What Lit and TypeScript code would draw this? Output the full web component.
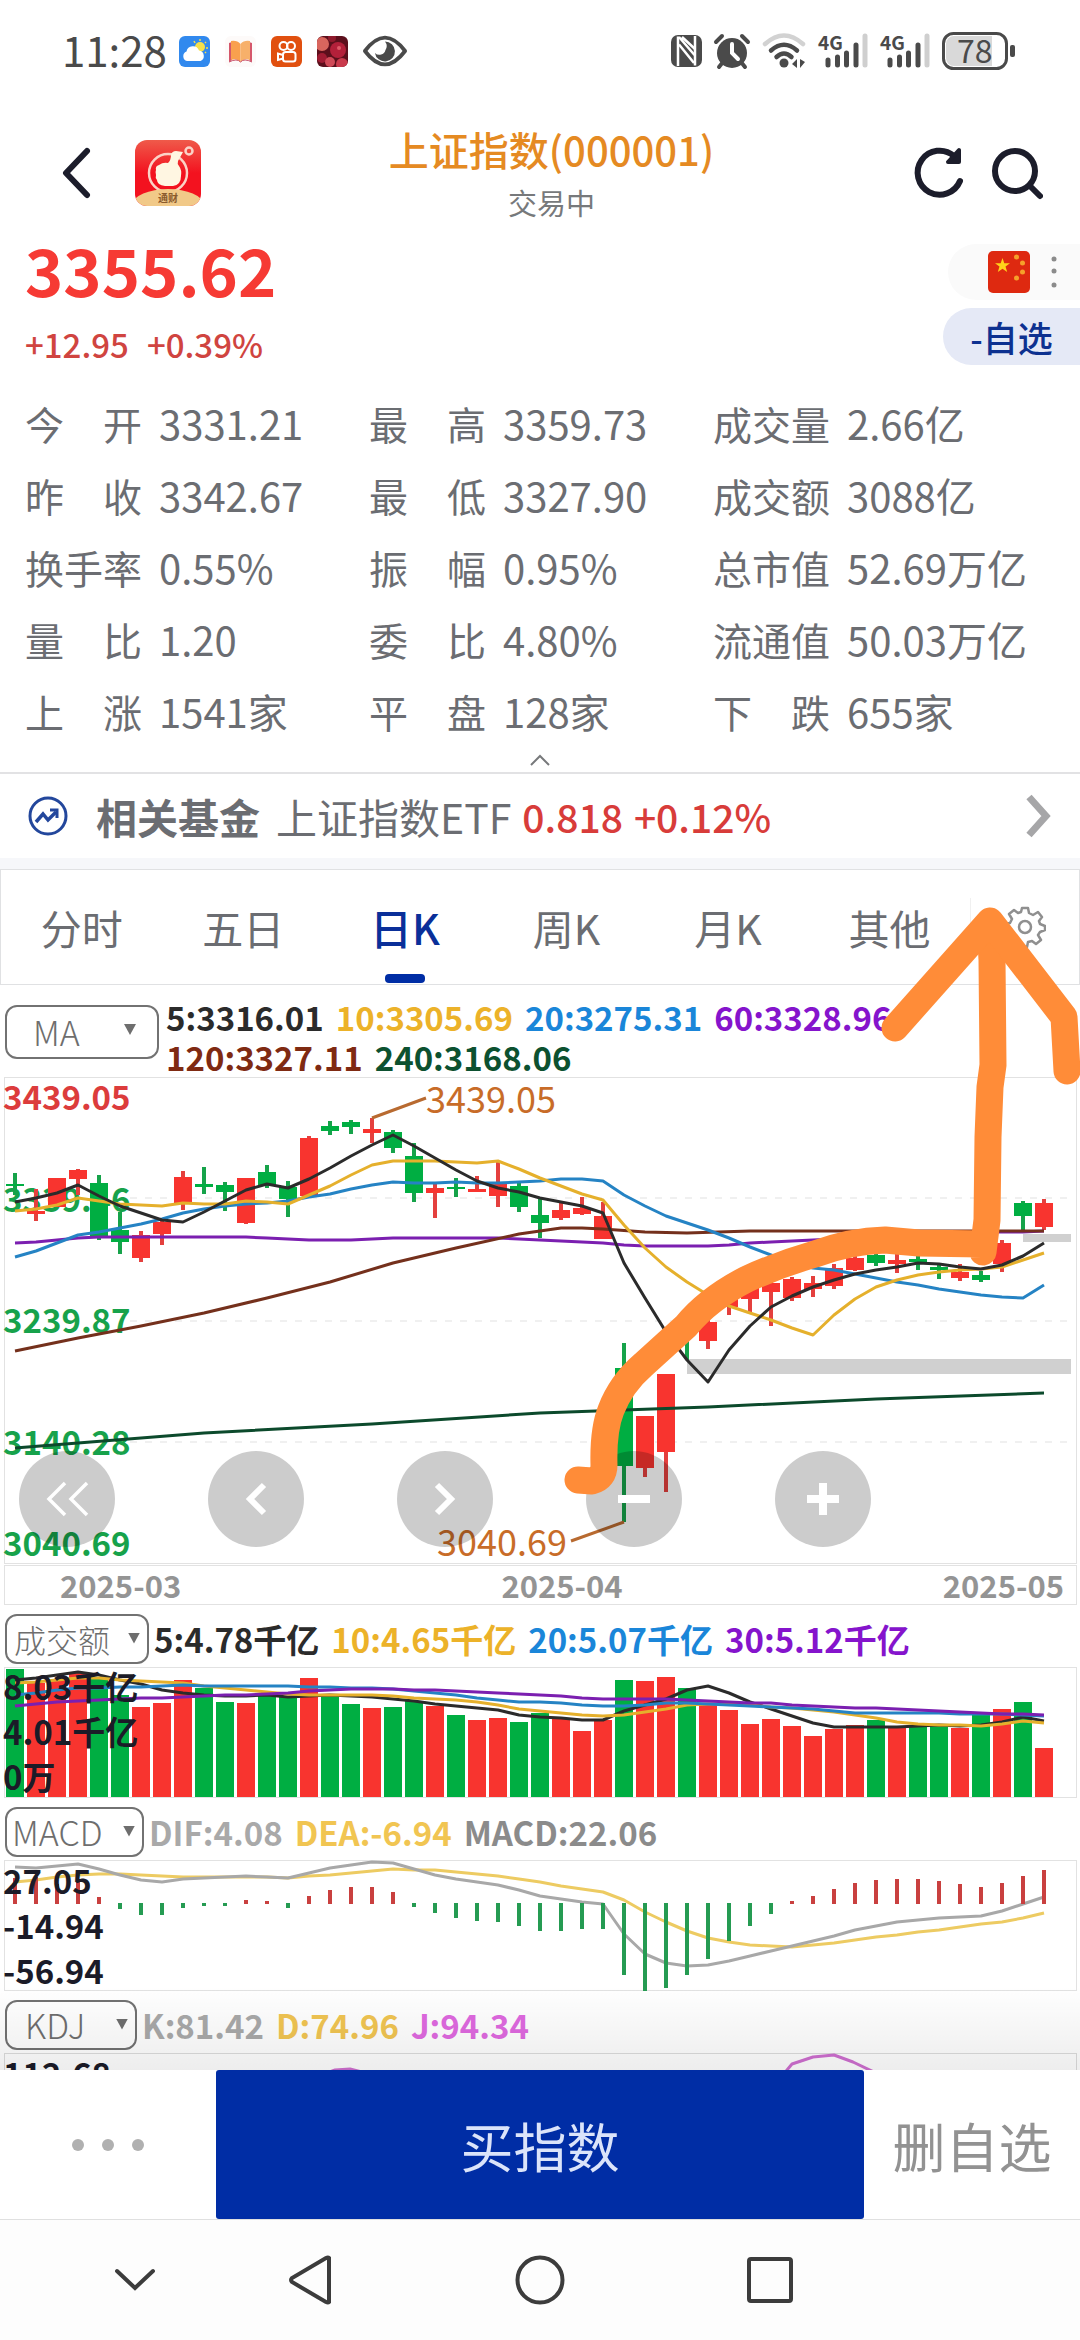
import { LitElement, html, svg, css } from "lit";
import { customElement, state } from "lit/decorators.js";

type Candle = [high: number, top: number, bottom: number, low: number, dir: number];
type LabelItem = { text: string; tone: string };

const STEP = 21;
const FIRST = 15;
const BODY = 18;
const RED = "#f8342f";
const GREEN = "#00ae42";
const xAt = (i: number) => FIRST + i * STEP;

// Each candle: high, body top, body bottom, low (plot units), 1 = rising, 0 = falling.
const CANDLES: Candle[] = [
  [103, 114, 116, 125, 0], [119, 141, 144, 151, 1], [108, 108, 137, 137, 1], [99, 100, 109, 125, 1], [105, 113, 167, 170, 0],
  [142, 160, 172, 184, 0], [161, 165, 188, 192, 1], [148, 152, 164, 175, 1], [101, 107, 133, 140, 1], [97, 114, 117, 124, 0],
  [112, 115, 122, 141, 0], [108, 108, 153, 154, 1], [95, 102, 115, 118, 0], [111, 117, 129, 147, 0], [66, 68, 126, 126, 1],
  [51, 56, 61, 65, 0], [50, 52, 57, 64, 0], [48, 59, 63, 73, 1], [60, 62, 78, 83, 0], [73, 86, 123, 132, 0],
  [114, 118, 123, 148, 1], [108, 117, 119, 127, 0], [106, 119, 122, 122, 1], [92, 112, 126, 137, 1], [112, 116, 137, 142, 0],
  [128, 145, 153, 168, 0], [133, 140, 148, 150, 1], [127, 138, 144, 145, 1], [132, 146, 169, 169, 1], [273, 298, 396, 452, 0],
  [346, 346, 398, 407, 1], [304, 304, 382, 422, 1], [240, 245, 262, 290, 0], [245, 252, 271, 279, 1], [220, 225, 237, 245, 1],
  [212, 218, 229, 242, 1], [208, 213, 222, 256, 1], [207, 209, 228, 231, 1], [206, 213, 219, 227, 1], [194, 198, 216, 219, 1],
  [184, 188, 200, 201, 1], [181, 185, 193, 196, 0], [183, 190, 194, 203, 1], [185, 189, 192, 200, 0], [195, 197, 200, 209, 0],
  [194, 202, 208, 211, 1], [201, 205, 210, 212, 0], [170, 173, 194, 202, 1], [131, 133, 146, 163, 0], [129, 133, 157, 160, 1],
];

const MA5 = [132, 128, 123, 115, 126, 136, 143, 150, 152, 142, 131, 120, 114, 118, 109, 98, 86, 75, 65, 76, 88, 100, 111, 118, 122, 128, 132, 136, 143, 193, 228, 262, 290, 312, 280, 256, 237, 226, 217, 210, 204, 200, 197, 193, 194, 197, 199, 195, 186, 173];
const MA10 = [141, 139, 135, 128, 131, 134, 135, 136, 133, 134, 134, 131, 132, 134, 125, 116, 105, 95, 91, 91, 91, 92, 93, 91, 99, 108, 116, 124, 130, 155, 178, 197, 212, 225, 236, 243, 250, 258, 265, 245, 229, 217, 210, 205, 202, 200, 199, 197, 190, 183];
const MA20 = [187, 181, 173, 165, 162, 158, 154, 149, 143, 139, 136, 134, 133, 131, 127, 124, 119, 115, 112, 113, 113, 112, 113, 113, 112, 111, 109, 109, 111, 125, 136, 146, 153, 160, 168, 177, 185, 193, 198, 200, 204, 208, 212, 215, 219, 222, 225, 227, 228, 215];
const MA60 = [173, 172, 170, 168, 167, 167, 167, 167, 167, 167, 167, 167, 168, 169, 170, 170, 170, 169, 168, 168, 168, 168, 168, 168, 169, 170, 171, 172, 173, 175, 176, 176, 176, 176, 175, 173, 172, 171, 170, 169, 168, 167, 166, 165, 164, 163, 162, 162, 162, 161];
const MA120: [number, number][] = [[0, 281], [3, 268], [6, 256], [9, 243], [12, 228], [15, 212], [18, 193], [21, 178], [24, 164], [26, 158], [27, 158], [28, 159], [30, 162], [32, 163], [35, 161], [40, 161], [49, 161]];
const MA240: [number, number][] = [[0, 378], [9, 363], [17, 354], [25, 343], [33, 337], [41, 329], [49, 323]];

// Turnover: the top of each bar, and whether the day closed higher.
const VOL = [69, 83, 80, 72, 79, 95, 107, 103, 80, 88, 102, 103, 95, 96, 78, 96, 104, 108, 107, 101, 106, 115, 120, 118, 122, 113, 119, 131, 120, 80, 81, 77, 88, 104, 110, 124, 119, 126, 136, 129, 125, 120, 128, 125, 124, 128, 115, 109, 102, 148];
const VOL_UP = [0, 1, 1, 1, 0, 0, 1, 1, 1, 0, 0, 1, 0, 0, 1, 0, 0, 1, 0, 0, 1, 0, 1, 1, 0, 0, 1, 1, 1, 0, 1, 1, 0, 1, 1, 1, 1, 1, 1, 1, 1, 0, 1, 0, 0, 1, 0, 1, 0, 1];
const VOL5 = [80, 78, 75, 72, 75, 80, 84, 90, 93, 95, 96, 96, 95, 97, 96, 95, 96, 97, 99, 101, 104, 106, 108, 110, 115, 117, 118, 120, 120, 111, 105, 99, 90, 86, 93, 102, 109, 116, 123, 127, 127, 127, 127, 126, 125, 126, 125, 122, 117, 121];
const VOL10 = [83, 82, 80, 78, 78, 80, 81, 82, 83, 86, 88, 90, 92, 94, 95, 95, 95, 95, 96, 98, 99, 100, 102, 105, 109, 111, 113, 115, 116, 115, 112, 109, 105, 104, 104, 105, 107, 108, 110, 112, 115, 118, 122, 124, 125, 125, 126, 124, 121, 123];
const VOL20 = [95, 93, 90, 88, 88, 87, 87, 86, 85, 86, 86, 86, 86, 86, 87, 87, 88, 88, 89, 91, 93, 95, 98, 100, 102, 102, 103, 105, 106, 106, 105, 103, 103, 104, 105, 106, 107, 108, 109, 111, 113, 113, 113, 113, 113, 114, 114, 114, 115, 116];
const VOL30 = [106, 104, 102, 101, 100, 99, 98, 98, 97, 96, 95, 95, 94, 93, 91, 90, 89, 89, 89, 90, 90, 91, 92, 93, 94, 95, 96, 98, 99, 99, 99, 99, 100, 101, 102, 103, 103, 105, 106, 107, 108, 108, 109, 110, 111, 112, 113, 114, 114, 115];

const MACD_ZERO = 303;
const MACD = [278, 277, 284, 282, 297, 308, 314, 314, 307, 305, 305, 300, 301, 307, 296, 290, 287, 287, 292, 306, 312, 317, 320, 321, 325, 330, 330, 328, 328, 374, 390, 387, 374, 358, 340, 325, 313, 301, 296, 289, 283, 280, 279, 279, 281, 284, 287, 283, 276, 270];
const DIF = [267, 268, 266, 264, 269, 275, 280, 282, 279, 278, 277, 276, 277, 278, 273, 268, 265, 262, 263, 269, 275, 279, 282, 285, 290, 296, 299, 302, 304, 334, 354, 363, 366, 365, 361, 356, 351, 346, 341, 336, 330, 326, 322, 320, 318, 317, 316, 311, 304, 297];
const DEA = [282, 280, 277, 275, 274, 274, 275, 276, 277, 277, 277, 277, 277, 278, 276, 275, 273, 271, 269, 270, 270, 272, 274, 276, 279, 282, 286, 289, 292, 300, 312, 322, 331, 338, 342, 345, 346, 347, 345, 343, 340, 337, 335, 332, 330, 327, 324, 322, 318, 313];

const STATS: [string, string][] = [
  ["今开", "3331.21"], ["最高", "3359.73"], ["成交量", "2.66亿"],
  ["昨收", "3342.67"], ["最低", "3327.90"], ["成交额", "3088亿"],
  ["换手率", "0.55%"], ["振幅", "0.95%"], ["总市值", "52.69万亿"],
  ["量比", "1.20"], ["委比", "4.80%"], ["流通值", "50.03万亿"],
  ["上涨", "1541家"], ["平盘", "128家"], ["下跌", "655家"],
];

const series = (values: number[]) => values.map((y, i) => `${xAt(i)},${y}`).join(" ");
const sparse = (points: [number, number][]) => points.map(([i, y]) => `${xAt(i)},${y}`).join(" ");
const line = (points: string, color: string, width = 3) =>
  svg`<polyline points=${points} fill="none" stroke=${color} stroke-width=${width} stroke-linejoin="round"/>`;

const chartStyles = css`
  :host { display: block; }
  svg { display: block; width: 100%; height: auto; font-family: "Noto Sans CJK SC", sans-serif; }
  .scale { font-size: 33px; font-weight: 700; }
  .high { fill: #dc3c3c; }
  .low { fill: #17a24b; }
  .ink { fill: #1b1b28; }
  .callout { font-size: 36px; fill: #c86c28; }
`;

@customElement("price-chart")
export class PriceChart extends LitElement {
  static styles = chartStyles;
  render() {
    return html`<svg viewBox="0 7 1080 488" role="img" aria-label="日K">
      <rect x="4.5" y="7.5" width="1072" height="486" fill="none" stroke="#e2e2e2"/>
      ${[128, 251, 372].map((y) => svg`<path d="M130 ${y}H1072" stroke="#ececec" stroke-width="1.5" stroke-dasharray="7 8"/>`)}
      <text class="scale high" x="3" y="40">3439.05</text>
      <text class="scale low" x="3" y="142">3339.46</text>
      <text class="scale low" x="3" y="263">3239.87</text>
      <text class="scale low" x="3" y="385">3140.28</text>
      <text class="scale low" x="3" y="486">3040.69</text>
      <rect x="687" y="289" width="384" height="15" fill="#d0d0d0"/>
      <rect x="1023" y="164" width="48" height="8" fill="#d0d0d0"/>
      ${CANDLES.map(([high, top, bottom, low, up], i) => {
        const color = up ? RED : GREEN;
        return svg`<rect x=${xAt(i) - 2} y=${high} width="4" height=${low - high} fill=${up ? "#e4403e" : "#16a34a"}/>
          <rect x=${xAt(i) - 9} y=${top} width=${BODY} height=${bottom - top} fill=${color}/>`;
      })}
      ${line(series(MA60), "#7b1fb0")}
      ${line(sparse(MA240), "#0c4a2c")}
      ${line(sparse(MA120), "#74301c")}
      ${line(series(MA20), "#2583c4")}
      ${line(series(MA10), "#e5b02c")}
      ${line(series(MA5), "#2b2b2b")}
      <path d="M372 48L426 28M624 452L571 471" stroke="#b86a30" stroke-width="3"/>
      <text class="callout" x="426" y="43">3439.05</text>
      <text class="callout" x="437" y="486">3040.69</text>
    </svg>`;
  }
}

@customElement("turnover-chart")
export class TurnoverChart extends LitElement {
  static styles = chartStyles;
  render() {
    return html`<svg viewBox="0 67 1080 131" role="img" aria-label="成交额">
      <rect x="4.5" y="67.5" width="1072" height="130" fill="none" stroke="#e2e2e2"/>
      ${VOL.map((y, i) => svg`<rect x=${xAt(i) - 9} y=${y} width=${BODY} height=${197 - y} fill=${VOL_UP[i] ? RED : GREEN}/>`)}
      ${line(series(VOL5), "#2b2b2b")}
      ${line(series(VOL10), "#e5b02c")}
      ${line(series(VOL20), "#2583c4")}
      ${line(series(VOL30), "#7b1fb0")}
      <text class="scale ink" x="3" y="100">8.03千亿</text>
      <text class="scale ink" x="3" y="145">4.01千亿</text>
      <text class="scale ink" x="3" y="190">0万</text>
    </svg>`;
  }
}

@customElement("macd-chart")
export class MacdChart extends LitElement {
  static styles = chartStyles;
  render() {
    return html`<svg viewBox="0 260 1080 131" role="img" aria-label="MACD">
      <rect x="4.5" y="260.5" width="1072" height="130" fill="none" stroke="#e2e2e2"/>
      ${line(series(DEA), "#edcb62")}
      ${line(series(DIF), "#a8a8a8")}
      ${MACD.map((y, i) => svg`<rect x=${xAt(i) - 2} y=${Math.min(y, MACD_ZERO)} width="4" height=${Math.abs(y - MACD_ZERO) + 1} fill=${y < MACD_ZERO ? "#c9403f" : "#259b52"}/>`)}
      <text class="scale ink" x="3" y="294">27.05</text>
      <text class="scale ink" x="3" y="339">-14.94</text>
      <text class="scale ink" x="3" y="384">-56.94</text>
    </svg>`;
  }
}

@customElement("kdj-chart")
export class KdjChart extends LitElement {
  static styles = chartStyles;
  render() {
    return html`<svg viewBox="0 453 1080 131" role="img" aria-label="KDJ">
      <rect x="4.5" y="453.5" width="1072" height="130" fill="none" stroke="#dcdcdc"/>
      <text class="scale ink" x="3" y="487">112.68</text>
      ${line("318,476 335,470 350,469 362,472", "#cf6fd0")}
      ${line("782,476 792,464 813,457 834,455 853,462 878,474", "#cf6fd0")}
    </svg>`;
  }
}

@customElement("indicator-legend")
export class IndicatorLegend extends LitElement {
  static properties = { name: {}, options: { attribute: false }, rows: { attribute: false }, size: {} };
  declare name: string;
  declare options: string[];
  declare rows: LabelItem[][];
  declare size: string;
  static styles = css`
    :host { display: block; }
    .bar { display: flex; align-items: center; gap: 5px; padding: 5px 0 0 5px; height: 57px; }
    .bar.tall { align-items: flex-start; gap: 7px; padding-top: 12px; height: 80px; }
    .picker { position: relative; display: block; flex: none; }
    .tall .picker { margin-top: 8px; }
    select {
      appearance: none; display: block; box-sizing: border-box; height: 50px; width: 144px; margin: 0;
      padding: 0 32px 0 7px; border: 2px solid #727272; border-radius: 12px; background: #fff; color: #6e6e6e;
      font: 300 32px/44px "Noto Sans CJK SC", sans-serif;
    }
    select.wide, select.mid, select.slim { font-size: 34px; }
    select.wide { width: 154px; height: 54px; padding-left: 26px; }
    select.mid { width: 139px; padding-left: 5px; }
    select.slim { width: 132px; padding-left: 18px; }
    .picker::after {
      content: ""; position: absolute; right: 9px; top: 19px; width: 12px; height: 11px;
      background: #6e6e6e; clip-path: polygon(0 0, 100% 0, 50% 100%);
    }
    .tall .picker::after { right: 23px; }
    .rows { min-width: 0; }
    .row { display: flex; gap: 12px; font: 700 33px/40px "Noto Sans CJK SC", sans-serif; white-space: nowrap; }
    .ink { color: #2b2b2b; }
    .gold { color: #ecb229; }
    .sand { color: #f1c552; }
    .blue { color: #1a86d9; }
    .violet { color: #8514cc; }
    .brown { color: #7f2a12; }
    .forest { color: #0c5130; }
    .silver { color: #a9a9a9; }
    .grey { color: #8b8b8b; }
    .pink { color: #df69e0; }
  `;
  render() {
    return html`<div class="bar ${this.size === "wide" ? "tall" : ""}">
      <label class="picker"><select class=${this.size} aria-label=${this.name}>
        ${this.options.map((o) => html`<option>${o}</option>`)}
      </select></label>
      <div class="rows">${this.rows.map((r) => html`<div class="row">${r.map((it) => html`<span class=${it.tone}>${it.text}</span>`)}</div>`)}</div>
    </div>`;
  }
}

@customElement("status-bar")
export class StatusBar extends LitElement {
  static styles = css`
    :host { display: block; }
    .bar { display: flex; align-items: center; justify-content: space-between; height: 102px; padding: 0 64px 0 62px; }
    .side { display: flex; align-items: center; }
    .time { font: 400 42px/60px "Noto Sans CJK SC", sans-serif; color: #4a4a4a; margin-right: 12px; padding-bottom: 4px; }
    .apps { display: flex; align-items: center; gap: 15px; }
    .system { gap: 12px; }
    .battery { font: 400 32px "Noto Sans CJK SC", sans-serif; fill: #4a4a4a; }
    .net { font: 700 19px "Noto Sans CJK SC", sans-serif; fill: #4a4a4a; }
    svg { display: block; overflow: visible; }
  `;
  private signal() {
    return html`<svg width="50" height="36" viewBox="0 0 50 36">
      <text class="net" x="0" y="17">4G</text>
      <g stroke="#4a4a4a" stroke-width="5" stroke-linecap="round"><path d="M10 27V32M19.500 24V32M28.500 20V32M38 12V32"/><path d="M47 3V32" stroke="#cfcfcf"/></g>
    </svg>`;
  }
  render() {
    return html`<div class="bar">
      <div class="side">
        <span class="time">11:28</span>
        <div class="apps">
          <svg width="31" height="31" viewBox="0 0 31 31"><rect width="31" height="31" rx="6" fill="#3189ee"/><circle cx="21" cy="11" r="5" fill="#f5e04a"/><path d="M21 3V5M27 6L26 7M29 12H27M15 5L16 7M27 17L26 16" stroke="#f5e04a" stroke-width="1.500"/><path d="M8 25a5 5 0 0 1-.5-9.500a6.500 6.500 0 0 1 12.500-1a5.500 5.500 0 0 1 1.500 10.500z" fill="#fff"/></svg>
          <svg width="31" height="31" viewBox="0 0 31 31"><rect width="31" height="31" rx="6" fill="#fdfaf9"/><path d="M4 7L7 6V24L4 26zM27 7L24 6V24L27 26z" fill="#d5576b"/><path d="M6 5Q12 4 15.500 8V26Q12 22 6 24z" fill="#f9a04e"/><path d="M25 5Q19 4 15.500 8V26Q19 22 25 24z" fill="#f7b06a"/><path d="M4 26Q12 22 15.500 26Q19 22 27 26" stroke="#c9516b" fill="none"/></svg>
          <svg width="31" height="31" viewBox="0 0 31 31"><rect width="31" height="31" rx="6" fill="#e1500f"/><g fill="none" stroke="#fff" stroke-width="2"><circle cx="12.500" cy="10" r="4"/><circle cx="20" cy="10" r="4"/><rect x="12" y="16" width="12.500" height="9.500" rx="2.500"/><path d="M12 19L7 17.500V24L12 22.500"/></g></svg>
          <svg width="31" height="31" viewBox="0 0 31 31"><defs><clipPath id="p"><rect width="31" height="31" rx="6"/></clipPath></defs><g clip-path="url(#p)"><rect width="31" height="31" fill="#5c0f1c"/><circle cx="5" cy="8" r="7" fill="#d9665e"/><circle cx="21" cy="14" r="8" fill="#b3203a"/><circle cx="15" cy="2" r="4" fill="#8e1a2c"/><circle cx="5" cy="22" r="5" fill="#a01c33"/><circle cx="13" cy="26" r="5" fill="#d04a58"/><circle cx="25" cy="28" r="6" fill="#c93a4c"/><circle cx="22" cy="12" r="2" fill="#df5a68"/></g></svg>
          <svg width="44" height="32" viewBox="0 0 46 32"><path d="M2 16Q23-12 44 16Q23 44 2 16z" fill="none" stroke="#4a4a4a" stroke-width="4" stroke-linejoin="round"/><path d="M23 6a10.500 10.500 0 1 1-10.500 12a6.500 6.500 0 0 0 11-3a8 8 0 0 0-.5-9z" fill="#4a4a4a"/></svg>
        </div>
      </div>
      <div class="side system">
        <svg width="31" height="32" viewBox="0 0 31 32"><rect width="31" height="32" rx="7" fill="#4a4a4a"/><path d="M7 1.500V31M24 1V30.500" stroke="#fff" stroke-width="2.500"/><path d="M8 2L23.500 20M8 9.500L23 28M11 2L24 14" stroke="#fff" stroke-width="2.500" fill="none"/></svg>
        <svg width="36" height="35" viewBox="0 0 36 35"><circle cx="18" cy="19" r="15" fill="#4a4a4a"/><path d="M2 8L8 2M34 8L28 2M9 28L5 33M27 28L31 33" stroke="#4a4a4a" stroke-width="4" stroke-linecap="round"/><path d="M18 10V19L24 25" stroke="#fff" stroke-width="4" fill="none" stroke-linecap="round"/></svg>
        <svg width="44" height="36" viewBox="0 0 44 36"><g fill="none" stroke-width="4.500" stroke-linecap="round"><path d="M3 11Q22-6 41 11" stroke="#d2d2d2"/><path d="M9 17.500Q22 6 35 17.500M14.500 24Q22 17 29.500 24" stroke="#4a4a4a"/></g><circle cx="22" cy="30" r="4.500" fill="#4a4a4a"/><path d="M35 26V35L30 31zM38 26V35L43 29z" fill="#4a4a4a"/></svg>
        ${this.signal()}${this.signal()}
        <svg width="74" height="38" viewBox="0 0 74 38"><rect x="1.500" y="1.500" width="63" height="35" rx="10" fill="#fff" stroke="#4a4a4a" stroke-width="3"/><path d="M12 4H50V34H12a8 8 0 0 1-8-8V12a8 8 0 0 1 8-8z" fill="#d9d9d9"/><rect x="68" y="13" width="5" height="12" rx="2" fill="#4a4a4a"/><text class="battery" x="15" y="31">78</text></svg>
      </div>
    </div>`;
  }
}

@customElement("app-root")
export class AppRoot extends LitElement {
  @state() private period = "日K";

  static styles = css`
    :host {
      display: flex; flex-direction: column; height: 100vh; position: relative; overflow: hidden;
      background: #fff; color: #6b6d72; font-family: "Noto Sans CJK SC", sans-serif;
    }
    button { appearance: none; border: 0; margin: 0; padding: 0; background: none; font: inherit; color: inherit; }
    a { color: inherit; text-decoration: none; }
    svg { display: block; }
    main { flex: 1 1 0; min-height: 0; overflow: hidden; position: relative; }

    .head { display: grid; grid-template-columns: 1fr auto 1fr; align-items: center; height: 142px; padding: 0 37px 0 60px; }
    .left { display: flex; align-items: center; gap: 44px; }
    .right { display: flex; align-items: center; justify-content: flex-end; gap: 25px; }
    .titles { text-align: center; }
    h1 { margin: 0 0 8px; font-size: 40px; line-height: 50px; font-weight: 500; color: #e58a22; }
    .phase { font-size: 29px; line-height: 40px; color: #77797b; }

    .quote { display: flex; justify-content: space-between; height: 146px; padding-left: 25px; }
    .price { font-size: 65px; line-height: 50px; font-weight: 700; color: #f63a34; }
    .change { display: flex; gap: 18px; margin-top: 28px; font-size: 33px; line-height: 44px; font-weight: 500; color: #d04440; }
    .side { display: flex; flex-direction: column; align-items: flex-end; gap: 8px; }
    .region { display: flex; align-items: center; gap: 21px; height: 56px; width: 132px; padding-left: 40px; box-sizing: border-box; border-radius: 28px 0 0 28px; background: #fafafa; }
    .watch { height: 57px; width: 137px; border-radius: 29px 0 0 29px; background: #e5e9f6; color: #0d3190; font-size: 35px; line-height: 54px; font-weight: 500; }

    .stats { display: grid; grid-template-columns: 344fr 344fr 367fr; grid-auto-rows: 72px; margin: 0; padding-left: 25px; font-size: 39px; line-height: 66px; }
    .stat { display: flex; gap: 17px; }
    dt { display: flex; justify-content: space-between; width: 117px; }
    dd { margin: 0; font-size: 40px; white-space: nowrap; }
    .fold { display: flex; justify-content: center; width: 100%; height: 22px; padding-top: 4px; box-sizing: border-box; }

    .fund { display: flex; align-items: center; height: 84px; padding: 0 28px; border-top: 2px solid #e2e2e4; border-bottom: 11px solid #f6f7fa; font-size: 41px; line-height: 56px; white-space: nowrap; }
    .fund-icon { margin-right: 28px; }
    .fund b { font-weight: 700; margin-right: 16px; }
    .fund-num { margin-left: 11px; font-size: 39px; font-weight: 500; color: #d83c3a; }
    .fund-go { margin-left: auto; }

    .tabs { display: flex; height: 116px; box-sizing: border-box; border: 1px solid #e0e1e3; }
    .tab { flex: 162; display: flex; flex-direction: column; align-items: center; padding-top: 28px; font-size: 41px; line-height: 58px; position: relative; }
    .tab.on { color: #0a2f99; font-size: 42px; font-weight: 500; }
    .tab.on::after { content: ""; position: absolute; bottom: 1px; width: 40px; height: 9px; border-radius: 4px; background: #002da5; }
    .gear { flex: 108; display: flex; align-items: center; justify-content: center; margin: 28px 0; border-left: 1px solid #f0f0f0; }

    .plot { position: relative; }
    .controls { position: absolute; left: 19px; bottom: 18px; display: flex; gap: 93px; }
    .round { width: 96px; height: 96px; border-radius: 50%; background: rgba(0, 0, 0, 0.2); display: flex; align-items: center; justify-content: center; }
    .dates { display: flex; justify-content: space-between; box-sizing: border-box; height: 40px; margin: 0 3px 0 4px; padding: 0 12px 0 55px; border: 1px solid #e2e2e2; font-size: 31px; line-height: 37px; font-weight: 700; color: #949494; }
    .shade { position: absolute; left: 0; right: 0; bottom: 0; height: 84px; background: linear-gradient(rgba(0, 0, 0, 0), rgba(0, 0, 0, 0.07)); pointer-events: none; }

    .actions { display: grid; grid-template-columns: 1fr 3fr 1fr; height: 149px; border-bottom: 1px solid #e0e0e0; background: #fff; font-size: 53px; line-height: 80px; }
    .more { display: flex; align-items: center; justify-content: center; }
    .buy { background: #002da5; color: #dbe4fa; border-radius: 3px; }
    .remove { color: #929292; }
    .system { display: grid; grid-template-columns: 120fr 230fr 230fr 230fr 195fr; align-items: center; justify-items: center; height: 120px; padding-left: 75px; background: #fdfdfd; }
    .sketch { position: absolute; top: 0; left: 0; width: 100%; pointer-events: none; }
  `;

  private legend(name: string, size: string, options: string[], rows: [string, string][][]) {
    return html`<indicator-legend .name=${name} .size=${size} .options=${options}
      .rows=${rows.map((r) => r.map(([text, tone]) => ({ text, tone })))}></indicator-legend>`;
  }

  render() {
    const tabs = ["分时", "五日", "日K", "周K", "月K", "其他"];
    const white = "#fff";
    return html`
      <main>
        <status-bar></status-bar>
        <header class="head">
          <div class="left">
            <button aria-label="返回"><svg width="31" height="52" viewBox="0 0 31 52"><path d="M27 4L6 26L27 48" fill="none" stroke="#1c1d2b" stroke-width="6" stroke-linecap="round" stroke-linejoin="round"/></svg></button>
            <svg width="66" height="66" viewBox="0 0 66 66" role="img" aria-label="通财">
              <defs><clipPath id="logo"><rect width="66" height="66" rx="12"/></clipPath><linearGradient id="red" x1="0" y1="0" x2="0" y2="1"><stop offset="0" stop-color="#ef5a4a"/><stop offset="0.5" stop-color="#f3121f"/></linearGradient></defs>
              <g clip-path="url(#logo)"><rect width="66" height="66" fill="url(#red)"/>
              <circle cx="33" cy="33" r="19" fill="none" stroke="#fbd2c6" stroke-width="2.500"/>
              <path d="M33 23Q36 20 36 15Q37 11 41 11L48 12L43 21Q42 24 44 26Q47 30 46 36Q46 45 38 46L30 46Q22 45 22 40Q20 38 21 35Q20 32 21 30Q20 26 24 25Q28 22 33 23z" fill="#fff6e2"/>
              <circle cx="54" cy="11" r="3.500" fill="none" stroke="#fbd2c6" stroke-width="2.500"/>
              <ellipse cx="33" cy="64" rx="35" ry="15" fill="#f1c988"/>
              <text x="33" y="62" text-anchor="middle" font-size="10" font-weight="700" fill="#8a5a2c">通财</text></g>
            </svg>
          </div>
          <div class="titles"><h1>上证指数(000001)</h1><div class="phase">交易中</div></div>
          <div class="right">
            <button aria-label="刷新"><svg width="54" height="54" viewBox="0 0 54 54"><path d="M48 35A22 22 0 1 1 42 10" fill="none" stroke="#1c1d2b" stroke-width="6" stroke-linecap="round"/><path d="M47 4V16L36 16z" fill="#1c1d2b" stroke="#1c1d2b" stroke-width="4" stroke-linejoin="round"/></svg></button>
            <button aria-label="搜索"><svg width="52" height="54" viewBox="0 0 52 54"><circle cx="24" cy="25" r="20" fill="none" stroke="#1c1d2b" stroke-width="6"/><path d="M39 40L49 50" stroke="#1c1d2b" stroke-width="6" stroke-linecap="round"/></svg></button>
          </div>
        </header>

        <section class="quote">
          <div>
            <div class="price">3355.62</div>
            <div class="change"><span>+12.95</span><span>+0.39%</span></div>
          </div>
          <div class="side">
            <button class="region" aria-label="市场">
              <svg width="42" height="42" viewBox="0 0 42 42"><rect width="42" height="42" rx="5" fill="#de2910"/><path d="M14.500 7L16.300 12.300H22L17.500 15.600L19.200 21L14.500 17.700L9.800 21L11.500 15.600L7 12.300H12.700z" fill="#ffd21a"/><g fill="#f6a02a"><circle cx="28.500" cy="6" r="2.500"/><circle cx="34.500" cy="12" r="2.500"/><circle cx="34.500" cy="21" r="2.500"/><circle cx="28.500" cy="27" r="2.500"/></g></svg>
              <svg width="6" height="32" viewBox="0 0 6 32" fill="#8b8b8b"><circle cx="3" cy="3" r="2.500"/><circle cx="3" cy="15" r="2.500"/><circle cx="3" cy="29" r="2.500"/></svg>
            </button>
            <button class="watch">-自选</button>
          </div>
        </section>

        <dl class="stats">
          ${STATS.map(([name, value]) => html`<div class="stat"><dt>${[...name].map((c) => html`<span>${c}</span>`)}</dt><dd>${value}</dd></div>`)}
        </dl>
        <button class="fold" aria-label="收起"><svg width="20" height="12" viewBox="0 0 20 12"><path d="M1 11L10 2L19 11" fill="none" stroke="#77797b" stroke-width="2"/></svg></button>

        <a class="fund" href="#fund">
          <svg class="fund-icon" width="40" height="40" viewBox="0 0 40 40"><circle cx="20" cy="20" r="18" fill="none" stroke="#23479c" stroke-width="3"/><path d="M8 26L15 18L20 24L28 16" fill="none" stroke="#23479c" stroke-width="3.500"/><path d="M22 14H29V22" fill="none" stroke="#23479c" stroke-width="3"/></svg>
          <b>相关基金</b><span>上证指数ETF</span><span class="fund-num">0.818</span><span class="fund-num">+0.12%</span>
          <svg class="fund-go" width="26" height="44" viewBox="0 0 26 44"><path d="M3 3L20 22L3 41" fill="none" stroke="#a6a6a8" stroke-width="7"/></svg>
        </a>

        <nav class="tabs">
          ${tabs.map((t) => html`<button class="tab ${t === this.period ? "on" : ""}" @click=${() => (this.period = t)}>${t}</button>`)}
          <button class="gear" aria-label="设置">
            <svg width="42" height="42" viewBox="0 0 42 42" fill="none" stroke="#8f8f8f" stroke-width="2.500" stroke-linejoin="round"><path d="M18 2H24L25 7L29 9L34 6L38 11L35 15L36 18L41 20V24L36 26L34 29L37 34L32 38L28 35L24 36L23 41H18L17 36L13 34L8 37L4 32L7 28L6 25L1 23V18L6 17L8 13L5 8L10 4L14 7L17 6z"/><circle cx="21" cy="21" r="6"/></svg>
          </button>
        </nav>

        ${this.legend("均线", "wide", ["MA", "BOLL"], [
          [["5:3316.01", "ink"], ["10:3305.69", "gold"], ["20:3275.31", "blue"], ["60:3328.96", "violet"]],
          [["120:3327.11", "brown"], ["240:3168.06", "forest"]],
        ])}
        <div class="plot">
          <price-chart></price-chart>
          <div class="controls">
            <button class="round" aria-label="最早"><svg width="44" height="36" viewBox="0 0 44 36" fill="none" stroke=${white} stroke-width="3.500"><path d="M20 2L4 18L20 34M42 2L26 18L42 34"/></svg></button>
            <button class="round" aria-label="左移"><svg width="24" height="34" viewBox="0 0 24 34" fill="none" stroke=${white} stroke-width="6"><path d="M20 3L6 17L20 31"/></svg></button>
            <button class="round" aria-label="右移"><svg width="24" height="34" viewBox="0 0 24 34" fill="none" stroke=${white} stroke-width="6"><path d="M4 3L18 17L4 31"/></svg></button>
            <button class="round" aria-label="缩小"><svg width="32" height="32" viewBox="0 0 32 32"><path d="M0 16H32" stroke=${white} stroke-width="8"/></svg></button>
            <button class="round" aria-label="放大"><svg width="32" height="32" viewBox="0 0 32 32"><path d="M0 16H32M16 0V32" stroke=${white} stroke-width="8"/></svg></button>
          </div>
        </div>
        <div class="dates"><span>2025-03</span><span>2025-04</span><span>2025-05</span></div>

        ${this.legend("成交额", "full", ["成交额", "成交量"], [
          [["5:4.78千亿", "ink"], ["10:4.65千亿", "gold"], ["20:5.07千亿", "blue"], ["30:5.12千亿", "violet"]],
        ])}
        <turnover-chart></turnover-chart>
        ${this.legend("MACD", "mid", ["MACD"], [
          [["DIF:4.08", "silver"], ["DEA:-6.94", "sand"], ["MACD:22.06", "grey"]],
        ])}
        <macd-chart></macd-chart>
        ${this.legend("KDJ", "slim", ["KDJ"], [
          [["K:81.42", "silver"], ["D:74.96", "sand"], ["J:94.34", "pink"]],
        ])}
        <kdj-chart></kdj-chart>
        <div class="shade"></div>
      </main>

      <div class="actions">
        <button class="more" aria-label="更多"><svg width="74" height="14" viewBox="0 0 74 14" fill="#b0b0b0"><circle cx="7" cy="7" r="6"/><circle cx="37" cy="7" r="6"/><circle cx="67" cy="7" r="6"/></svg></button>
        <button class="buy">买指数</button>
        <button class="remove">删自选</button>
      </div>
      <nav class="system">
        <button aria-label="收起键盘"><svg width="42" height="24" viewBox="0 0 42 24"><path d="M3 3L21 20L39 3" fill="none" stroke="#3c3c3c" stroke-width="4" stroke-linecap="round"/></svg></button>
        <button aria-label="后退"><svg width="44" height="50" viewBox="0 0 44 50"><path d="M41 3V47Q40 48 38 47L4 27Q2 25 4 23L38 3Q40 2 41 3z" fill="none" stroke="#3c3c3c" stroke-width="4"/></svg></button>
        <button aria-label="主页"><svg width="50" height="50" viewBox="0 0 50 50"><circle cx="25" cy="25" r="22.500" fill="none" stroke="#3c3c3c" stroke-width="4"/></svg></button>
        <button aria-label="最近任务"><svg width="46" height="46" viewBox="0 0 46 46"><rect x="2" y="2" width="42" height="42" rx="2" fill="none" stroke="#3c3c3c" stroke-width="4"/></svg></button>
      </nav>

      <svg class="sketch" viewBox="0 0 1080 2340" aria-hidden="true">
        <g fill="none" stroke="#ff8c38" stroke-width="27" stroke-linecap="round" stroke-linejoin="round">
          <path d="M578 1480L592 1481Q604 1478 604 1465Q603 1430 611 1410Q621 1384 643 1365L686 1326Q708 1299 747 1279Q780 1264 815 1254Q850 1241 885 1240L919 1243L982 1244L983 1252L987 1220L988 1137L990 1087L993 1065L992 960L990 922"/>
          <path d="M895 1028L990 921L1064 1017L1067 1071"/>
        </g>
      </svg>
    `;
  }
}
